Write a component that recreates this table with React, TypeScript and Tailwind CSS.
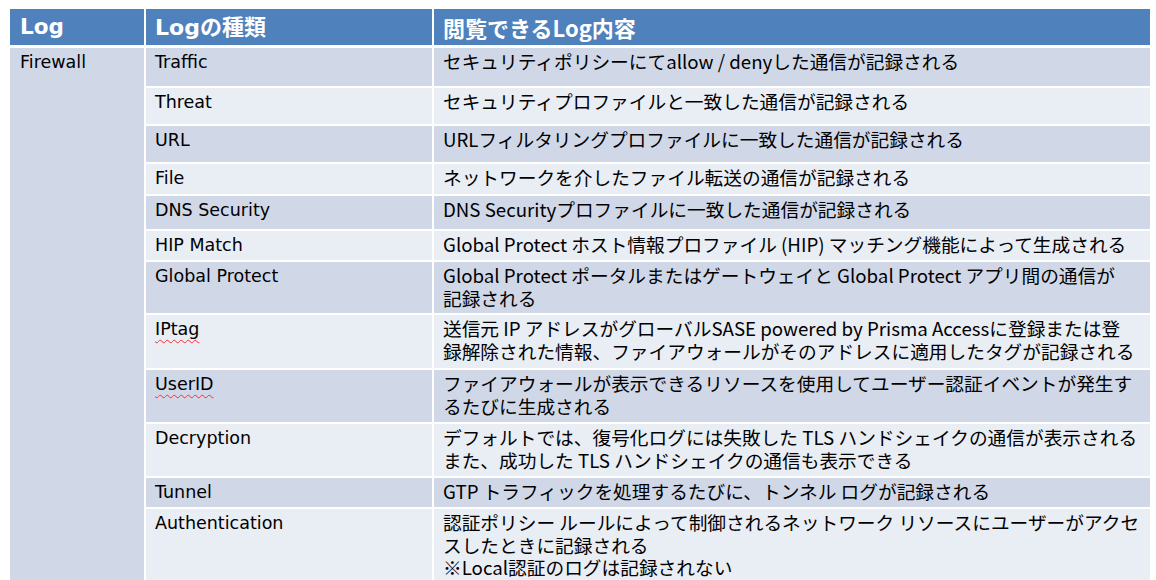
import React from "react";

type Row = {
  kind: string;
  desc: string[];
  squiggle?: boolean;
};

// 行の高さは元の表に合わせて固定
const ROWS: Row[] = [
  { kind: "Traffic", desc: ["セキュリティポリシーにてallow / denyした通信が記録される"] },
  { kind: "Threat", desc: ["セキュリティプロファイルと一致した通信が記録される"] },
  { kind: "URL", desc: ["URLフィルタリングプロファイルに一致した通信が記録される"] },
  { kind: "File", desc: ["ネットワークを介したファイル転送の通信が記録される"] },
  { kind: "DNS Security", desc: ["DNS Securityプロファイルに一致した通信が記録される"] },
  { kind: "HIP Match", desc: ["Global Protect ホスト情報プロファイル (HIP) マッチング機能によって生成される"] },
  {
    kind: "Global Protect",
    desc: ["Global Protect ポータルまたはゲートウェイと Global Protect アプリ間の通信が", "記録される"],
  },
  {
    kind: "IPtag",
    squiggle: true,
    desc: [
      "送信元 IP アドレスがグローバルSASE powered by Prisma Accessに登録または登",
      "録解除された情報、ファイアウォールがそのアドレスに適用したタグが記録される",
    ],
  },
  {
    kind: "UserID",
    squiggle: true,
    desc: ["ファイアウォールが表示できるリソースを使用してユーザー認証イベントが発生す", "るたびに生成される"],
  },
  {
    kind: "Decryption",
    desc: ["デフォルトでは、復号化ログには失敗した TLS ハンドシェイクの通信が表示される", "また、成功した TLS ハンドシェイクの通信も表示できる"],
  },
  { kind: "Tunnel", desc: ["GTP トラフィックを処理するたびに、トンネル ログが記録される"] },
  {
    kind: "Authentication",
    desc: [
      "認証ポリシー ルールによって制御されるネットワーク リソースにユーザーがアクセ",
      "スしたときに記録される",
      "※Local認証のログは記録されない",
    ],
  },
];

const SANS = "font-['DejaVu_Sans','Noto_Sans_CJK_JP',sans-serif]";
const JP = "font-['Noto_Sans_CJK_JP',sans-serif]";

export default function App() {
  return (
    <div className="w-[1156px] h-[580px] bg-white pt-[9px] px-[10px] overflow-hidden">
      {/* ヘッダー */}
      <div className="grid grid-cols-[134px_286px_716px] gap-x-[2px] h-[36px] text-white font-bold">
        <div className={`bg-[#4f81bd] flex items-center pl-[10px] text-[21.5px] ${SANS}`}>Log</div>
        <div className={`bg-[#4f81bd] flex items-center pl-[9px] text-[22px] ${SANS}`}>Logの種類</div>
        <div className={`bg-[#4f81bd] flex items-center pl-[9px] text-[22px] ${JP}`}>閲覧できるLog内容</div>
      </div>

      {/* 本体 */}
      <div className="mt-[3px] grid grid-cols-[134px_286px_716px] grid-rows-[38px_36px_36px_30px_33px_29px_51px_53px_52px_52px_29px_80px] gap-[2px] text-black">
        <div className={`row-span-12 bg-[#d0d8e8] pl-[10px] pt-[3px] text-[17.5px] leading-[22px] ${SANS}`}>
          Firewall
        </div>
        {ROWS.map((r, i) => {
          const bg = i % 2 === 0 ? "bg-[#d0d8e8]" : "bg-[#e9edf4]";
          return (
            <React.Fragment key={r.kind}>
              <div className={`${bg} pl-[9px] pt-[3px] text-[17.5px] leading-[22px] ${SANS}`}>
                <span
                  className={
                    r.squiggle
                      ? "underline decoration-wavy decoration-red-500 decoration-1 underline-offset-[4px]"
                      : ""
                  }
                >
                  {r.kind}
                </span>
              </div>
              <div className={`${bg} pl-[9px] pt-[2px] text-[18.7px] leading-[22.5px] whitespace-nowrap ${JP}`}>
                {r.desc.map((line) => (
                  <div key={line}>{line}</div>
                ))}
              </div>
            </React.Fragment>
          );
        })}
      </div>
    </div>
  );
}
